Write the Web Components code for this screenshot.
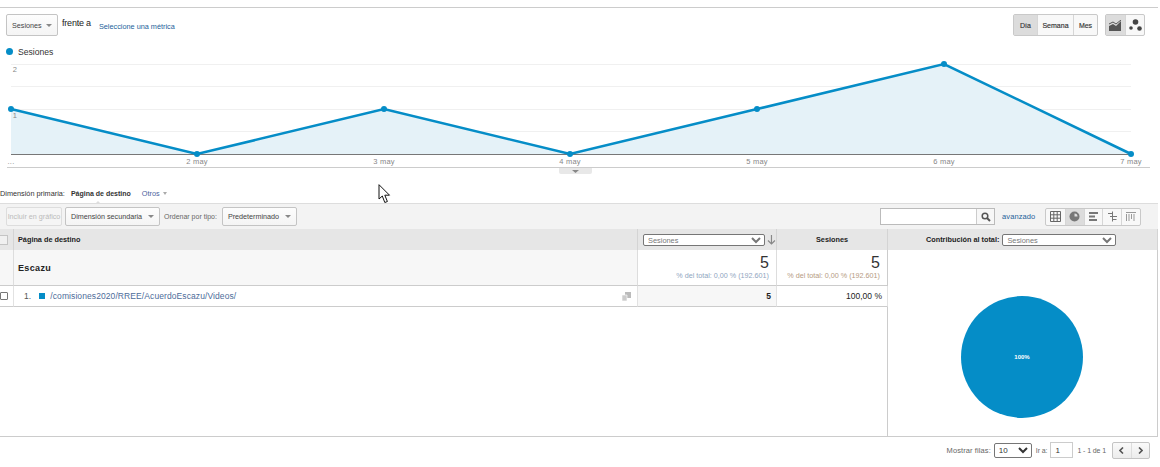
<!DOCTYPE html>
<html lang="es">
<head>
<meta charset="utf-8">
<title>Sesiones</title>
<style>
html, body { margin: 0; padding: 0; background: #fff; overflow: hidden; }
body { width: 1160px; height: 467px; position: relative; font-family: "Liberation Sans", Arial, sans-serif; color: #333; }
</style>
</head>
<body>
<ga-topbar></ga-topbar>
<ga-chart></ga-chart>
<ga-dimensions></ga-dimensions>
<ga-toolbar></ga-toolbar>
<ga-table></ga-table>
<ga-pager></ga-pager>
<ga-cursor></ga-cursor>

<script>
const define = (name, html) => {
  customElements.define(name, class extends HTMLElement {
    constructor() {
      super();
      this.attachShadow({ mode: "open" }).innerHTML = html;
    }
  });
};

const selectCss = `
select {
  font: 7.4px "Liberation Sans", Arial, sans-serif;
  color: #777;
  background: #fff;
  border: 1px solid #767676;
  border-radius: 2px;
  box-sizing: border-box;
  margin: 0;
  padding: 0;
}`;

define("ga-btn", `
<style>
:host {
  display: inline-flex;
  align-items: center;
  justify-content: space-between;
  box-sizing: border-box;
  height: 19px;
  padding: 0 5px 0 5px;
  border: 1px solid #c4c4c4;
  border-radius: 2px;
  background: linear-gradient(#fdfdfd, #f4f4f4);
  font: 7.2px "Liberation Sans", Arial, sans-serif;
  color: #444;
  white-space: nowrap;
}
:host([disabled]) { color: #bbb; border-color: #ddd; background: #f5f5f5; justify-content: center; }
i { width: 0; height: 0; border: 3px solid transparent; border-top: 3px solid #888; border-bottom: 0; }
:host([plain]) i { display: none; }
</style>
<slot></slot><i></i>`);

define("ga-seg", `
<style>
:host {
  display: inline-flex;
  border: 1px solid #c9c9c9;
  border-radius: 2px;
  background: #f8f8f8;
}
</style>
<slot></slot>`);

define("ga-seg-item", `
<style>
:host {
  display: flex;
  align-items: center;
  justify-content: center;
  box-sizing: border-box;
  height: 100%;
  border-left: 1px solid #d6d6d6;
  font: 7px "Liberation Sans", Arial, sans-serif;
  -webkit-text-stroke: .15px #333;
  color: #333;
}
:host(:first-child) { border-left: 0; }
:host([on]) { background: #dcdcdc; }
</style>
<slot></slot>`);

define("ga-topbar", `
<style>
:host {
  display: flex;
  box-sizing: border-box;
  align-items: flex-start;
  width: 1158px;
  height: 40px;
  margin-top: 7px;
  padding: 6px 13px 0 6px;
  border-top: 1px solid #ccc;
}
.frente { font-size: 9px; margin: 4px 0 0 4px; color: #222; letter-spacing: -.2px; }
.metric { font-size: 7.3px; margin: 8px 0 0 8px; color: #1d5f9a; white-space: nowrap; }
.right { margin-left: auto; display: flex; gap: 7px; }
ga-btn { height: 22px; width: 52px; }
ga-seg { height: 22px; box-sizing: border-box; }
svg { display: block; }
</style>
<ga-btn>Sesiones</ga-btn>
<span class="frente">frente a</span>
<span class="metric">Seleccione una métrica</span>
<div class="right">
  <ga-seg>
    <ga-seg-item on style="width:23px">Día</ga-seg-item>
    <ga-seg-item style="width:36px">Semana</ga-seg-item>
    <ga-seg-item style="width:24px">Mes</ga-seg-item>
  </ga-seg>
  <ga-seg>
    <ga-seg-item on style="width:19px">
      <svg width="13" height="11" viewBox="0 0 13 11"><path d="M0 11V6l4-2 3 2 5-5v10z" fill="#555"/><path d="M0 4l4-2 3 2 5-4" fill="none" stroke="#555"/></svg>
    </ga-seg-item>
    <ga-seg-item style="width:19px">
      <svg width="13" height="12" viewBox="0 0 13 12" fill="#444"><circle cx="6.5" cy="3" r="2.8"/><circle cx="2" cy="9" r="1.8"/><circle cx="10.5" cy="9.5" r="2.3"/></svg>
    </ga-seg-item>
  </ga-seg>
</div>`);

define("ga-chart", `
<style>
:host { display: block; width: 1160px; height: 130px; margin-top: -3px; }
.legend { display: flex; align-items: center; box-sizing: border-box; height: 14px; padding: 1px 0 0 6px; gap: 5px; font-size: 8.6px; color: #333; }
.legend i { width: 7px; height: 7px; border-radius: 50%; background: #058dc7; }
svg { display: block; }
text { font: 7.5px "Liberation Sans", Arial, sans-serif; fill: #888; text-anchor: middle; letter-spacing: .2px; }
</style>
<div class="legend"><i></i><span>Sesiones</span></div>
<svg width="1160" height="116" viewBox="0 58 1160 116">
  <g stroke="#f0f0f0">
    <path d="M11 64.500H1131M11 86.500H1131M11 109.500H1131M11 131.500H1131"/>
  </g>
  <path d="M11 109L197 154 384 109 570 154 757 109 944 64 1131 154H11z" fill="#e5f2f8"/>
  <path d="M11 154.500H1132" stroke="#777"/>
  <path d="M11 109L197 154 384 109 570 154 757 109 944 64 1131 154" fill="none" stroke="#058dc7" stroke-width="2.6"/>
  <g fill="#058dc7">
    <circle cx="11" cy="109" r="3"/><circle cx="197" cy="154" r="3"/><circle cx="384" cy="109" r="3"/>
    <circle cx="570" cy="154" r="3"/><circle cx="757" cy="109" r="3"/><circle cx="944" cy="64" r="3"/><circle cx="1131" cy="154" r="3"/>
  </g>
  <text x="15" y="72">2</text>
  <text x="15" y="118">1</text>
  <text x="11" y="164">...</text>
  <text x="197" y="164">2 may</text>
  <text x="384" y="164">3 may</text>
  <text x="570" y="164">4 may</text>
  <text x="757" y="164">5 may</text>
  <text x="944" y="164">6 may</text>
  <text x="1131" y="164">7 may</text>
  <path d="M7 167.500H1150" stroke="#ccc"/>
  <path d="M559 168h33v4a2 2 0 0 1-2 2h-29a2 2 0 0 1-2-2z" fill="#e8e8e8"/>
  <path d="M572 170h7l-3.500 3z" fill="#888"/>
</svg>`);

define("ga-dimensions", `
<style>
:host {
  display: flex;
  align-items: center;
  position: relative;
  box-sizing: border-box;
  width: 1158px;
  height: 21px;
  margin-top: 9px;
  border-bottom: 1px solid #ddd;
  font-size: 7.3px;
  color: #333;
  white-space: nowrap;
}
b { margin-left: 6px; font-size: 7px; }
a { margin-left: 11px; color: #4a5f9e; }
i { margin-left: 3px; width: 0; height: 0; border: 2.500px solid transparent; border-top: 3px solid #aaa; border-bottom: 0; }
.notch { position: absolute; left: 95px; bottom: -1px; width: 0; height: 0; margin: 0; border: 3px solid transparent; border-bottom: 3px solid #ddd; border-top: 0; }
</style>
<span>Dimensión primaria:</span><b>Página de destino</b><a>Otros</a><i></i><i class="notch"></i>`);

define("ga-toolbar", `
<style>
:host {
  display: flex;
  align-items: center;
  box-sizing: border-box;
  width: 1158px;
  height: 25px;
  padding: 0 17px 0 6px;
  background: #f3f3f3;
  font-size: 7px;
  color: #666;
  white-space: nowrap;
}
.inc { width: 56px; padding: 0; margin-right: 3px; }
.inc, .dim, .ord { flex: none; }
.dim { width: 95px; }
.ord { width: 75px; margin-left: 5px; }
.lbl { margin-left: 4px; }
.search { display: flex; margin-left: auto; height: 17px; box-sizing: border-box; border: 1px solid #bbb; background: #fff; }
.search div { width: 95px; }
.search span { display: flex; align-items: center; justify-content: center; width: 17px; border-left: 1px solid #ccc; background: #f7f7f7; }
a { width: 34px; margin: 0 9px 0 7px; color: #1d5f9a; font-size: 7.5px; letter-spacing: .1px; }
ga-seg { height: 18px; box-sizing: border-box; }
ga-seg-item { width: 18.800px; }
</style>
<ga-btn class="inc" plain disabled>Incluir en gráfico</ga-btn>
<ga-btn class="dim">Dimensión secundaria</ga-btn>
<span class="lbl">Ordenar por tipo:</span>
<ga-btn class="ord">Predeterminado</ga-btn>
<div class="search">
  <div></div>
  <span><svg width="10" height="10" viewBox="0 0 10 10"><circle cx="4" cy="4" r="2.8" fill="none" stroke="#555" stroke-width="1.500"/><path d="M6 6l3 3" stroke="#555" stroke-width="2"/></svg></span>
</div>
<a>avanzado</a>
<ga-seg>
  <ga-seg-item><svg width="11" height="11" viewBox="0 0 11 11" fill="none" stroke="#666"><path d="M.5.500h10v10H.5zM.5 3.800h10M.5 7.200h10M3.800.500v10M7.200.500v10"/></svg></ga-seg-item>
  <ga-seg-item on><svg width="11" height="11" viewBox="0 0 11 11"><circle cx="5.500" cy="5.500" r="5" fill="#777"/><path d="M5.500 5.500V2.500A3 3 0 0 1 8.500 5.500z" fill="#ddd"/></svg></ga-seg-item>
  <ga-seg-item><svg width="11" height="11" viewBox="0 0 11 11" fill="#777"><path d="M1 1h9v2H1zM1 4.500h6v2H1zM1 8h8v2H1z"/></svg></ga-seg-item>
  <ga-seg-item><svg width="11" height="11" viewBox="0 0 11 11" fill="none" stroke="#777"><path d="M1 2.500h5M5.500 .5v10M3 5.500h7M5.500 8.500h4"/></svg></ga-seg-item>
  <ga-seg-item><svg width="12" height="11" viewBox="0 0 12 11" fill="none" stroke="#999"><path d="M1 1.500h10M1.500 3v7M4 3v7M6.500 3v5M9 3v7"/></svg></ga-seg-item>
</ga-seg>`);

define("ga-table", `
<style>
${selectCss}
:host {
  display: grid;
  grid-template-columns: 14px 624px 139px 111px 270px;
  grid-template-rows: 21px 36px 21px 130px;
  box-sizing: border-box;
  width: 1158px;
  height: 208px;
  border-bottom: 1px solid #ccc;
  font-size: 8px;
  color: #333;
}
.head { display: flex; align-items: center; background: #e6e6e6; border-right: 1px solid #d4d4d4; font-weight: bold; font-size: 7.3px; color: #222; white-space: nowrap; }
.box { width: 8px; height: 10px; box-sizing: border-box; border: 1px solid #c4c4c4; border-left: 0; background: #f0f0f0; }
.dim { padding-left: 4px; }
.m1 { padding-left: 5px; gap: 2px; }
.m2 { justify-content: center; }
.m3 { padding-left: 38px; gap: 3px; border-right-color: #d4d4d4; }
select { height: 12px; }
.m1 select { width: 123px; }
.m3 select { width: 114px; }
.sum { border-bottom: 1px solid #ccc; border-right: 1px solid #ddd; }
.total-l { background: #f7f7f7; }
.name { display: flex; align-items: center; padding-left: 4px; background: #f7f7f7; font-weight: bold; font-size: 9px; letter-spacing: .35px; color: #222; }
.num { display: flex; flex-direction: column; align-items: flex-end; padding: 4px 7px 0 0; box-sizing: border-box; }
.num b { font-weight: normal; font-size: 16px; line-height: 17px; color: #333; }
.num small { font-size: 7.2px; line-height: 10px; white-space: nowrap; }
.num .c1 { color: #8fa5c0; }
.num .c2 { color: #b59a82; }
.row { display: flex; align-items: center; box-sizing: border-box; border-bottom: 1px solid #ccc; border-right: 1px solid #e2e2e2; font-size: 8.500px; }
.chk { justify-content: flex-start; }
.chk i { width: 8px; height: 8px; box-sizing: border-box; border: 1px solid #777; border-radius: 1px; margin-left: 0; background: #fff; }
.path { padding-left: 10px; gap: 5px; color: #4d6c9a; letter-spacing: .09px; white-space: nowrap; }
.path em { font-style: normal; color: #555; margin-right: 3px; }
.path i { width: 6px; height: 6px; background: #058dc7; }
.path svg { margin-left: auto; margin-right: 6px; }
.v { justify-content: flex-end; padding-right: 5px; color: #222; }
.v1 { background: #f7f7f7; font-weight: bold; }
.pie { grid-column: 5; grid-row: 2 / span 3; display: flex; align-items: flex-end; justify-content: center; margin-left: -1px; border-left: 1px solid #ccc; border-right: 1px solid #ccc; }
.pie svg { display: block; margin: 0 0 19px -1px; }
.pie text { font: bold 6px "Liberation Sans", Arial, sans-serif; fill: #fff; text-anchor: middle; }
.fill { grid-column: 1 / span 4; }
</style>
<div class="head"><span class="box"></span></div>
<div class="head dim">Página de destino</div>
<div class="head m1"><select><option>Sesiones</option></select>
  <svg width="9" height="10" viewBox="0 0 9 10" fill="none" stroke="#888" stroke-width="1.200"><path d="M4.500 0v9M1 5.500l3.500 3.500L8 5.500"/></svg></div>
<div class="head m2">Sesiones</div>
<div class="head m3">Contribución al total: <select><option>Sesiones</option></select></div>

<div class="sum total-l"></div>
<div class="sum name">Escazu</div>
<div class="sum num"><b>5</b><small class="c1">% del total: 0,00 % (192.601)</small></div>
<div class="sum num"><b>5</b><small class="c2">% del total: 0,00 % (192.601)</small></div>
<div class="pie">
  <svg width="122" height="122" viewBox="0 0 122 122"><circle cx="61" cy="61" r="61" fill="#058dc7"/><text x="61" y="63">100%</text></svg>
</div>

<div class="row chk"><i></i></div>
<div class="row path"><em>1.</em><i></i><span>/comisiones2020/RREE/AcuerdoEscazu/Videos/</span>
  <svg width="9" height="9" viewBox="0 0 9 9"><path d="M3 0h6v6H3z" fill="#bbb"/><path d="M0 3h5v6H0z" fill="#ccc" stroke="#fff" stroke-width=".6"/></svg></div>
<div class="row v v1">5</div>
<div class="row v">100,00 %</div>
<div class="fill"></div>`);

define("ga-pager", `
<style>
${selectCss}
:host {
  display: flex;
  align-items: center;
  justify-content: flex-end;
  box-sizing: border-box;
  width: 1150px;
  height: 18px;
  margin-top: 4px;
  font-size: 7.5px;
  letter-spacing: .1px;
  color: #666;
  white-space: nowrap;
}
select { width: 38px; height: 15px; margin: 0 4px 0 3px; font-size: 8px; color: #333; }
.small { font-size: 7px; letter-spacing: -.1px; }
.go { display: flex; align-items: center; box-sizing: border-box; width: 23px; height: 16px; margin: 0 4px 0 3px; padding-left: 4px; border: 1px solid #ccc; font-size: 8px; color: #333; }
.nav { display: flex; box-sizing: border-box; width: 38px; height: 17px; margin-left: 6px; border: 1px solid #c4c4c4; border-radius: 2px; background: linear-gradient(#fafafa, #ececec); }
.nav span { flex: 1; display: flex; align-items: center; justify-content: center; }
.nav span + span { border-left: 1px solid #ddd; }
</style>
<span>Mostrar filas:</span>
<select><option>10</option></select>
<span class="small">Ir a:</span>
<div class="go">1</div>
<span class="small">1 - 1 de 1</span>
<div class="nav">
  <span><svg width="5" height="7" viewBox="0 0 5 7"><path d="M4 .5L1 3.500 4 6.500" fill="none" stroke="#555" stroke-width="1.600"/></svg></span>
  <span><svg width="5" height="7" viewBox="0 0 5 7"><path d="M1 .5L4 3.500 1 6.500" fill="none" stroke="#555" stroke-width="1.600"/></svg></span>
</div>`);

define("ga-cursor", `
<style>
:host { position: absolute; left: 378px; top: 184px; width: 13px; height: 20px; }
svg { display: block; }
</style>
<svg width="13" height="20" viewBox="0 0 13 20"><path d="M1 .7V15l3.300-3 2.500 6.500 2.600-1-2.600-6.300H11.500z" fill="#fff" stroke="#111" stroke-width="1"/></svg>`);
</script>
</body>
</html>
